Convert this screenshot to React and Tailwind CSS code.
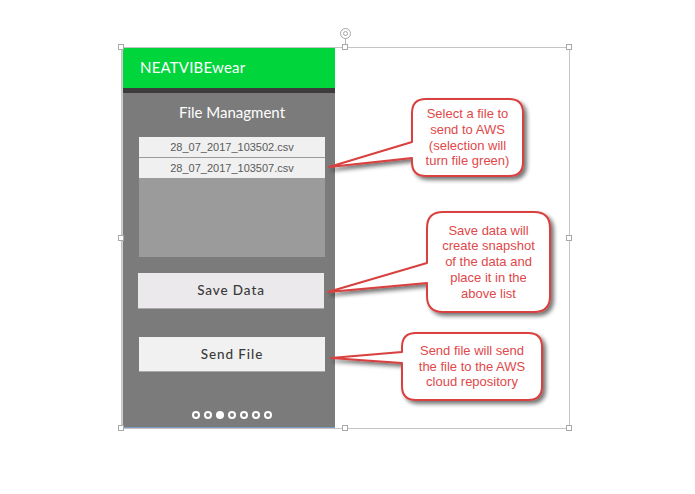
import React from 'react';

const files = ['28_07_2017_103502.csv', '28_07_2017_103507.csv'];

const callouts = [
  {
    d: 'M426 99 H509 Q523 99 523 113 V162 Q523 176 509 176 H426 Q412 176 412 162 V158 L329 167 L412 142 V113 Q412 99 426 99 Z',
    box: 'left-[412px] top-[99px] w-[111px] h-[77px]',
    lines: ['Select a file to', 'send to AWS', '(selection will', 'turn file green)'],
  },
  {
    d: 'M443 212 H534 Q550 212 550 228 V296 Q550 312 534 312 H443 Q427 312 427 296 V283 L328 292 L427 263 V228 Q427 212 443 212 Z',
    box: 'left-[427px] top-[212px] w-[123px] h-[100px]',
    lines: ['Save data will', 'create snapshot', 'of the data and', 'place it in the', 'above list'],
  },
  {
    d: 'M416 333 H528 Q542 333 542 347 V386 Q542 400 528 400 H416 Q402 400 402 386 V363 L331 358 L402 352 V347 Q402 333 416 333 Z',
    box: 'left-[402px] top-[333px] w-[140px] h-[67px]',
    lines: ['Send file will send', 'the file to the AWS', 'cloud repository'],
  },
];

const Handle = ({ className }) => (
  <div className={`absolute w-[6px] h-[6px] bg-white border border-[#a8a8a8] ${className}`} />
);

export default function App() {
  return (
    <div className="relative w-[695px] h-[494px] bg-white overflow-hidden font-['Liberation_Sans',Arial,sans-serif]">
      {/* phone mockup */}
      <div className="pt-[47px] pl-[121px]">
        <div className="flex w-[214px] h-[381px]">
          <div className="w-[2px] bg-[#cfcfcf]" />
          <div className="flex-1 flex flex-col bg-[#7b7b7b] border-b border-[#7d9cc4] font-['Lato','Noto_Sans',sans-serif]">
            <div className="h-[41px] bg-[#00d53b] flex items-center pl-[17px] text-white text-[15px] tracking-[0.2px]">
              NEATVIBEwear
            </div>
            <div className="h-[5px] bg-[#3d3b3c]" />
            <div className="mt-[9px] text-center text-white text-[15px] leading-[20px] pl-[6px]">File Managment</div>
            <div className="mt-[15px] ml-[16px] w-[186px] h-[120px] bg-[#9b9b9b] flex flex-col">
              {files.map((f) => (
                <div
                  key={f}
                  className="h-[20px] mb-[1px] bg-[#f0f0f0] flex items-center justify-center text-[11px] text-[#5a5a5a] font-['Liberation_Sans',Arial,sans-serif]"
                >
                  {f}
                </div>
              ))}
            </div>
            <button className="mt-[16px] ml-[15px] w-[186px] h-[36px] bg-[#ebe9ec] border-b border-[#a9a9a9] text-[13.5px] font-medium text-[#3a3a3a] tracking-[0.9px]">
              Save Data
            </button>
            <button className="mt-[28px] ml-[16px] w-[186px] h-[35px] bg-[#f1f1f1] border-b border-[#a9a9a9] text-[13.5px] font-medium text-[#3a3a3a] tracking-[0.9px]">
              Send File
            </button>
            <div className="mt-auto mb-[8px] flex justify-center gap-[4px] pl-[6px]">
              {[0, 1, 2, 3, 4, 5, 6].map((i) => (
                <span
                  key={i}
                  className={`w-[8px] h-[8px] rounded-full ${i === 2 ? 'bg-white' : 'border-2 border-white'}`}
                />
              ))}
            </div>
          </div>
        </div>
      </div>

      {/* selection frame */}
      <div className="absolute left-[121px] top-[47px] w-[449px] h-[382px] border border-[#c4c4c4]" />
      <div className="absolute left-[345px] top-[38px] w-px h-[9px] bg-[#b5b5b5]" />
      <div className="absolute left-[340px] top-[28px] w-[11px] h-[11px] rounded-full border border-[#a8a8a8] bg-white flex items-center justify-center">
        <span className="w-[5px] h-[5px] rounded-full border border-[#a8a8a8]" />
      </div>
      <Handle className="left-[118px] top-[44px]" />
      <Handle className="left-[342px] top-[44px]" />
      <Handle className="left-[566px] top-[44px]" />
      <Handle className="left-[118px] top-[235px]" />
      <Handle className="left-[566px] top-[235px]" />
      <Handle className="left-[118px] top-[425px]" />
      <Handle className="left-[342px] top-[425px]" />
      <Handle className="left-[566px] top-[425px]" />

      {/* callout shapes */}
      <svg className="absolute left-0 top-0" width="695" height="494">
        <defs>
          <filter id="sh" x="-20%" y="-20%" width="140%" height="150%">
            <feGaussianBlur in="SourceAlpha" stdDeviation="2" />
            <feOffset dx="3" dy="3" result="b" />
            <feComponentTransfer>
              <feFuncA type="linear" slope="0.55" />
            </feComponentTransfer>
            <feMerge>
              <feMergeNode />
              <feMergeNode in="SourceGraphic" />
            </feMerge>
          </filter>
        </defs>
        {callouts.map((c, i) => (
          <path key={i} d={c.d} fill="#ffffff" stroke="#d9403f" strokeWidth="2" strokeLinejoin="round" filter="url(#sh)" />
        ))}
      </svg>

      {callouts.map((c, i) => (
        <div
          key={i}
          className={`absolute ${c.box} flex flex-col items-center justify-center text-[13px] leading-[15.8px] text-[#e0484a]`}
        >
          {c.lines.map((l) => (
            <span key={l}>{l}</span>
          ))}
        </div>
      ))}
    </div>
  );
}
